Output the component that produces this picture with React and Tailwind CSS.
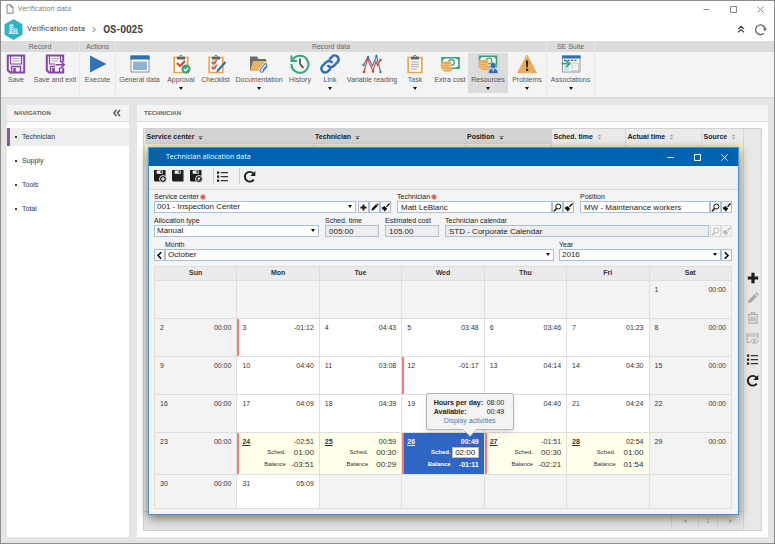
import { clsx } from 'clsx'

/* ---------- Icons ---------- */

function Svg({ size = 20, box = 20, className, children }) {
  return (
    <svg width={size} height={size} viewBox={`0 0 ${box} ${box}`} fill="none" className={clsx('shrink-0', className)} aria-hidden="true">
      {children}
    </svg>
  )
}

function PageIcon({ className }) {
  return (
    <Svg size={10} box={10} className={className}>
      <path d="M2 .8h3.8L8 3v6.2H2zM5.7.8v2.4H8" stroke="currentColor" strokeWidth="0.9" />
    </Svg>
  )
}

function CompanyIcon() {
  return (
    <svg width="19" height="21" viewBox="0 0 19 21" aria-hidden="true">
      <path d="M9.5.5l8.6 4.8v10.4l-8.6 4.8L.9 15.7V5.3z" fill="#2ab5c9" stroke="#1fa4b8" strokeWidth=".6" strokeLinejoin="round" />
      <path d="M5.500 5.500h4v9h-4z" fill="#e4f7f9" />
      <path d="M10 9.500h3.500v5H10z" fill="#b5e6ec" />
      <path d="M6.300 7h.9v1h-.9zm1.600 0h.9v1h-.9zM6.300 9h.9v1h-.9zm1.600 0h.9v1h-.9zm-1.600 2h.9v1h-.9zm1.600 0h.9v3.500h-.9zm3.300 0h1v1h-1zm0 2h1v1.500h-1z" fill="#2ab5c9" />
      <path d="M4.500 14.500h10" stroke="#e4f7f9" strokeWidth=".8" />
    </svg>
  )
}

function Floppy({ arrow }) {
  return (
    <Svg>
      <path d="M1.800 1.500h16.400v17H4l-2.200-2.200z" fill="#f7f4f9" stroke="#8447a8" strokeWidth="2" />
      <path d="M4.500 2v8h11V2" stroke="#8447a8" strokeWidth="1.200" />
      <path d="M5.500 18v-5.500h9V18" stroke="#8447a8" strokeWidth="1.400" />
      <path d="M6.500 4.500h7M6.500 7h7" stroke="#a9a9a9" strokeWidth="1" />
      <path d="M7.200 14h2.600v4.500H7.200z" fill="#8447a8" />
      {arrow && (
        <>
          <path d="M10 7.800h10.500v6H10z" fill="#f4f4f4" />
          <path d="M10.500 10.700h8.500M15.500 7l3.700 3.700-3.700 3.700" stroke="#8447a8" strokeWidth="1.600" />
        </>
      )}
    </Svg>
  )
}

function PlayIcon() {
  return (
    <Svg>
      <path d="M2 1.500l16.500 8.500L2 18.500z" fill="#3273b8" />
    </Svg>
  )
}

function WindowIcon() {
  return (
    <Svg>
      <path d="M1 2h18v16H1z" fill="#fff" stroke="#8c8c8c" />
      <path d="M.5 1.500h19V5.500H.5z" fill="#2f6fb5" />
      <path d="M3 7.500h14v8.700H3z" fill="#8fb2d9" />
    </Svg>
  )
}

function Clipboard({ children }) {
  return (
    <>
      <path d="M3.200 3.500h13.600v15H3.200z" fill="#fff" stroke="#e8a74c" strokeWidth="1.700" />
      <path d="M6 2.700h2.300a1.700 1.700 0 013.400 0H14V5.500H6z" fill="#5f6368" />
      <circle cx="10" cy="2.500" r=".7" fill="#fff" />
      {children}
    </>
  )
}

function ApprovalIcon() {
  return (
    <Svg>
      <Clipboard>
        <path d="M6 9l3 3 5-5" stroke="#d6452c" strokeWidth="2.200" />
        <circle cx="15" cy="15" r="4.600" fill="#35a57c" />
        <path d="M12.800 15l1.700 1.700 2.800-3" stroke="#fff" strokeWidth="1.300" />
      </Clipboard>
    </Svg>
  )
}

function ChecklistIcon() {
  return (
    <Svg>
      <Clipboard>
        <path d="M6 7h3.500v3H6zM6 12h3.500v3H6z" stroke="#999" strokeWidth=".8" />
        <path d="M6 8.200l1.500 1.500L11 6M6 13.200l1.500 1.500L11 11" stroke="#d6452c" strokeWidth="1.400" />
        <path d="M19.500 8L12 16.500" stroke="#2f6fb5" strokeWidth="2.200" />
        <path d="M11.300 15.500l1.800 1.700-3 1.300z" fill="#2f6fb5" />
      </Clipboard>
    </Svg>
  )
}

function FolderClipIcon() {
  return (
    <Svg>
      <path d="M1 2.500h7L9.500 5H17v11H1z" fill="#6b6b6b" />
      <path d="M4 7h14l-2.500 10H1z" fill="#e8b260" />
      <path d="M18.500 12l-4.500 5.500c-1.600 1.700-4-.2-2.600-2l4.300-5.300c1-1.200 2.800.1 1.900 1.400l-3.900 4.800" stroke="#fff" strokeWidth="2.600" />
      <path d="M18.500 12l-4.500 5.500c-1.600 1.700-4-.2-2.600-2l4.300-5.300c1-1.200 2.800.1 1.900 1.400l-3.900 4.800" stroke="#3b78c0" strokeWidth="1.100" />
    </Svg>
  )
}

function HistoryIcon() {
  return (
    <Svg>
      <path d="M3 5.500A8.500 8.500 0 111.500 10" stroke="#34a47b" strokeWidth="2" />
      <path d="M1.500 1.500v5.500H7" stroke="#34a47b" strokeWidth="2" />
      <path d="M10 4.500V10l3.500 4" stroke="#444" strokeWidth="1.600" />
    </Svg>
  )
}

function LinkIcon() {
  return (
    <Svg>
      <g stroke="#2f6fb5" strokeWidth="2.500" strokeLinecap="round">
        <path d="M8.200 11.800a4 4 0 005.600 0l3.700-3.700a3.600 3.600 0 00-5.400-5.500L9.800 4.900" />
        <path d="M11.800 8.200a4 4 0 00-5.600 0l-3.700 3.700a3.600 3.600 0 005.400 5.500l2.300-2.300" />
      </g>
    </Svg>
  )
}

function VariableIcon() {
  return (
    <Svg>
      <path d="M1.500 11L6 3l4.500 9L14.500 2 18.500 17.500" stroke="#3b78c0" strokeWidth="1.100" />
      <path d="M2 17.500L5.500 5l5.500 12 3-9.500 1.500 4L18.500 6" stroke="#d6452c" strokeWidth="1.100" />
      <g fill="#3b78c0">
        <circle cx="1.500" cy="11" r="1.200" />
        <circle cx="6" cy="3" r="1.200" />
        <circle cx="14.500" cy="2" r="1.200" />
        <circle cx="18.500" cy="18" r="1.200" />
      </g>
      <g fill="#d6452c">
        <circle cx="2" cy="18" r="1.300" />
        <circle cx="5.500" cy="5.500" r="1.200" />
        <circle cx="11" cy="17.500" r="1.300" />
        <circle cx="18.500" cy="6" r="1.300" />
      </g>
    </Svg>
  )
}

function TaskIcon() {
  return (
    <Svg>
      <Clipboard>
        <path d="M6 8h8M6 10.300h8M6 12.600h8M6 15h6" stroke="#999" strokeWidth=".9" />
      </Clipboard>
    </Svg>
  )
}

function Money() {
  return (
    <>
      <path d="M2 3.800h17v10.400H2z" fill="#fff" stroke="#34a47b" strokeWidth="1.600" />
      <path d="M2 3.500h3.500L2 7zM19 3.500h-3.500L19 7zM19 14.500h-3.500L19 11z" fill="#34a47b" />
      <circle cx="11.500" cy="8.500" r="2.800" fill="#fff" stroke="#34a47b" strokeWidth="1.300" />
      <g fill="#e8a74c" stroke="#f8e2bc" strokeWidth=".5">
        <ellipse cx="7.500" cy="16" rx="5" ry="1.900" />
        <ellipse cx="6.500" cy="13.700" rx="5" ry="1.900" />
        <ellipse cx="5.500" cy="11.400" rx="5" ry="1.900" />
        <ellipse cx="6.500" cy="9.100" rx="5" ry="1.900" />
      </g>
    </>
  )
}

function ExtraCostIcon() {
  return (
    <Svg>
      <Money />
    </Svg>
  )
}

function ResourcesIcon() {
  return (
    <Svg>
      <g transform="translate(-.5 -1.500)">
        <Money />
      </g>
      <path d="M10.500 19.500c0-3.500 1-5 4.700-5s4.700 1.500 4.700 5z" fill="#2f6fb5" stroke="#dcdcdc" strokeWidth=".6" />
      <circle cx="15.200" cy="11.500" r="3" fill="#2f6fb5" stroke="#dcdcdc" strokeWidth=".6" />
      <path d="M14.500 15h1.400l-.7 3.500z" fill="#fff" />
    </Svg>
  )
}

function ProblemIcon() {
  return (
    <Svg>
      <path d="M10 1.200L19.500 18.800H.5z" fill="#e9ac57" stroke="#e9ac57" strokeLinejoin="round" />
      <path d="M8.900 6.500h2.400l-.5 7H9.400zM9 14.700h2.200v2.200H9z" fill="#222" />
    </Svg>
  )
}

function AssociationsIcon() {
  return (
    <Svg>
      <path d="M1.500 2h17.500v16H1.500z" fill="#f7f9fb" stroke="#8c8c8c" strokeWidth=".9" />
      <path d="M1 1.500h18.500V4.500H1z" fill="#2f6fb5" />
      <path d="M3 6.300h14" stroke="#3c5f88" strokeWidth="1.300" strokeDasharray="2 1.500" />
      <path d="M11 9h6.500v7.500H11z" fill="#fff" stroke="#b5b5b5" strokeWidth=".8" />
      <path d="M12.500 11.500h3.500M12.500 14h3.500" stroke="#c4c4c4" strokeWidth=".8" />
      <path d="M3 12h5v5.500H3z" fill="#bfe6f2" />
      <path d="M.5 9.700h6M5 6.500l3.700 3.200L5 12.900" stroke="#34a47b" strokeWidth="1.800" />
    </Svg>
  )
}

function SolidFloppy({ badge }) {
  return (
    <Svg size={14} box={14}>
      <path d="M1 1h11.500v11.500H2L1 11.500z" fill="#1d1d1d" />
      <path d="M3.700 1.500h6v3.300h-6z" fill="#f0f0f0" />
      <path d="M7.600 2h1.200v2.200H7.600z" fill="#1d1d1d" />
      {badge && (
        <>
          <circle cx="10" cy="10" r="3.500" fill="#1d1d1d" stroke="#f0f0f0" strokeWidth=".9" />
          {badge === 'plus' && <path d="M10 8v4M8 10h4" stroke="#fff" strokeWidth="1.100" />}
          {badge === 'close' && <path d="M8.700 8.700l2.600 2.600M11.300 8.700l-2.600 2.600" stroke="#fff" strokeWidth="1.100" />}
        </>
      )}
    </Svg>
  )
}

function ListIcon() {
  return (
    <Svg size={13} box={13}>
      <path d="M1 1.500h2.200v2.200H1zM1 5.500h2.200v2.200H1zM1 9.500h2.200v2.200H1z" fill="#1d1d1d" />
      <path d="M4.700 2.600H12M4.700 6.600H12M4.700 10.600H12" stroke="#333" strokeWidth="1.100" />
    </Svg>
  )
}

function ReloadIcon({ thin }) {
  return (
    <Svg size={13} box={13}>
      <path d={thin ? 'M9.800 10.200A4.800 4.800 0 1111.200 6' : 'M10.800 9.600A4.900 4.900 0 1110.300 3.300'} stroke={thin ? '#666' : '#1d1d1d'} strokeWidth={thin ? 1.3 : 1.9} />
      <path d={thin ? 'M8.800 5.500h4.200L11 8.300z' : 'M12.300 1v5H7.300z'} fill={thin ? '#666' : '#1d1d1d'} />
    </Svg>
  )
}

function PlusIcon({ size = 12 }) {
  return (
    <Svg size={size} box={12}>
      <path d="M6 .8v10.400M.8 6h10.400" stroke="#1d1d1d" strokeWidth="3.200" />
    </Svg>
  )
}

function PencilIcon({ size = 12 }) {
  return (
    <Svg size={size} box={12}>
      <path d="M.7 11.300l.9-3.300 6-6 2.400 2.400-6 6zM8.200 1.400L9.400.3l2.300 2.300-1.100 1.200z" fill="currentColor" />
    </Svg>
  )
}

function TrashIcon() {
  return (
    <Svg size={12} box={12}>
      <path d="M.8 2.500h10.400M4 2.300V.8h4v1.500M1.900 3v8.300h8.200V3M4.200 4.500v5M6 4.500v5M7.800 4.500v5" stroke="#ababab" strokeWidth="1.100" />
    </Svg>
  )
}

function PreviewIcon() {
  return (
    <Svg size={13} box={13}>
      <path d="M4 10.500H1V2h11v4.500M1 4h11" stroke="#b0b0b0" strokeWidth="1.100" />
      <path d="M4.500 9.200c2-3 5.800-3 7.800 0-2 2.800-5.800 2.800-7.800 0z" stroke="#b0b0b0" strokeWidth="1" />
      <circle cx="8.400" cy="9.200" r="1.200" fill="#b0b0b0" />
    </Svg>
  )
}

function BrushIcon() {
  return (
    <Svg size={9} box={9}>
      <path d="M8.500.5L5.500 3.800" stroke="currentColor" strokeWidth="1.300" />
      <path d="M3.500 3l2.700 2.700-2.400 2.800-.9-.9-.3-.9-1-.1-1-1.900z" fill="currentColor" />
    </Svg>
  )
}

function SearchIcon() {
  return (
    <Svg size={9} box={9}>
      <circle cx="5.300" cy="3.500" r="2.500" stroke="currentColor" strokeWidth="1" />
      <path d="M3.500 5.500L1 8.300" stroke="currentColor" strokeWidth="1.500" />
    </Svg>
  )
}

function Chevron({ left }) {
  return (
    <Svg size={9} box={9}>
      <path d={left ? 'M6.200 1.200L3 4.500l3.200 3.300' : 'M2.800 1.200L6 4.500 2.800 7.800'} stroke="#111" strokeWidth="1.600" />
    </Svg>
  )
}

function Caret({ className }) {
  return (
    <svg width="4" height="3" viewBox="0 0 4 3" className={className} aria-hidden="true">
      <path d="M0 0h4L2 3z" fill="#111" />
    </svg>
  )
}

function SortIcon({ active }) {
  return (
    <svg width="5" height="6" viewBox="0 0 5 6" className={active ? 'text-neutral-800' : 'text-neutral-400'} aria-hidden="true">
      {active ? (
        <path d="M.5 2.400h4v.7h-4zM.7 3.700h3.600L2.500 5.500z" fill="currentColor" />
      ) : (
        <path d="M.5 2.300L2.500.5l2 1.800zM.5 3.700h4l-2 1.800z" fill="currentColor" />
      )}
    </svg>
  )
}

function WindowButtons({ className }) {
  return (
    <div className={clsx('flex items-center gap-5', className)}>
      <button type="button" aria-label="Minimize">
        <Svg size={7} box={7}><path d="M.5 3.500h6" stroke="currentColor" /></Svg>
      </button>
      <button type="button" aria-label="Maximize">
        <Svg size={7} box={7}><path d="M.5.5h6v6h-6z" stroke="currentColor" /></Svg>
      </button>
      <button type="button" aria-label="Close">
        <Svg size={7} box={7}><path d="M.5.5l6 6M6.500.5l-6 6" stroke="currentColor" /></Svg>
      </button>
    </div>
  )
}

/* ---------- Ribbon ---------- */

const ribbon = [
  {
    title: 'Record',
    items: [
      { label: 'Save', icon: <Floppy />, width: 'w-[30px]' },
      { label: 'Save and exit', icon: <Floppy arrow />, width: 'w-[48px]' },
    ],
  },
  { title: 'Actions', items: [{ label: 'Execute', icon: <PlayIcon />, width: 'w-[35px]' }] },
  {
    title: 'Record data',
    items: [
      { label: 'General data', icon: <WindowIcon />, width: 'w-[47px]' },
      { label: 'Approval', icon: <ApprovalIcon />, width: 'w-[36px]', menu: true },
      { label: 'Checklist', icon: <ChecklistIcon />, width: 'w-[33px]' },
      { label: 'Documentation', icon: <FolderClipIcon />, width: 'w-[54px]', menu: true },
      { label: 'History', icon: <HistoryIcon />, width: 'w-[28px]' },
      { label: 'Link', icon: <LinkIcon />, width: 'w-[32px]', menu: true },
      { label: 'Variable reading', icon: <VariableIcon />, width: 'w-[52px]' },
      { label: 'Task', icon: <TaskIcon />, width: 'w-[34px]', menu: true },
      { label: 'Extra cost', icon: <ExtraCostIcon />, width: 'w-[36px]' },
      { label: 'Resources', icon: <ResourcesIcon />, width: 'w-[40px]', menu: true, active: true },
      { label: 'Problems', icon: <ProblemIcon />, width: 'w-[38px]', menu: true },
    ],
  },
  { title: 'SE Suite', items: [{ label: 'Associations', icon: <AssociationsIcon />, width: 'w-[47px]', menu: true }] },
]

function Ribbon() {
  return (
    <div className="flex border-b-2 border-[#dadada] bg-[#f4f4f4]">
      {ribbon.map((group) => (
        <section key={group.title} className="border-r border-[#e9e9e9]">
          <h2 className="h-[11px] bg-[#dcdcdc] text-center leading-[11px] text-[#666]">{group.title}</h2>
          <div className="flex pt-px">
            {group.items.map((item) => (
              <button
                key={item.label}
                type="button"
                className={clsx('flex h-10 flex-col items-center pt-px text-[#555]', item.width, item.active && 'bg-[#dcdcdc]')}
              >
                {item.icon}
                <span className="mt-px h-[10px] leading-[10px] whitespace-nowrap">{item.label}</span>
                {item.menu && <Caret className="mt-[2px]" />}
              </button>
            ))}
          </div>
        </section>
      ))}
      <div className="h-14 flex-1">
        <div className="h-[11px] bg-[#dcdcdc]" />
      </div>
    </div>
  )
}

/* ---------- Navigation ---------- */

const sections = ['Technician', 'Supply', 'Tools', 'Total']

function Navigation() {
  return (
    <nav className="w-[122px] shrink-0 bg-white">
      <div className="flex h-[17px] items-center justify-between border-b border-[#dcdcdc] bg-[#f4f4f4] pr-2 pl-[7px]">
        <h2 className="text-[6px] font-bold text-[#666]">NAVIGATION</h2>
        <button type="button" aria-label="Collapse navigation">
          <Svg size={8} box={8}><path d="M3.500.8L1 4l2.500 3.200M7 .8L4.500 4 7 7.200" stroke="#444" strokeWidth="1.300" /></Svg>
        </button>
      </div>
      <ul className="flex flex-col gap-[6px] pt-[6px]">
        {sections.map((name, i) => (
          <li key={name}>
            <a
              href="#"
              className={clsx(
                'flex h-[18px] items-center gap-[5px] border-l-[3px] pl-[5px] text-[#333]',
                i === 0 ? 'border-[#9152ad] bg-[#eee]' : 'border-transparent',
              )}
            >
              <span className="size-[2px] rounded-full bg-black" />
              {name}
            </a>
          </li>
        ))}
      </ul>
    </nav>
  )
}

/* ---------- Technician list ---------- */

const columns = [
  { name: 'Service center', sorted: true },
  { name: 'Technician', sorted: true, width: 'w-[152px]' },
  { name: 'Position', sorted: true, width: 'w-[86px]' },
  { name: 'Sched. time', width: 'w-[74px]' },
  { name: 'Actual time', width: 'w-[76px]' },
  { name: 'Source', width: 'w-[42px]' },
]

function TechnicianPanel() {
  return (
    <main className="flex min-w-0 flex-1 flex-col bg-white">
      <h2 className="h-[17px] border-b border-[#dcdcdc] bg-[#f4f4f4] pl-[7px] text-[6px] leading-4 font-bold text-[#666]">
        TECHNICIAN
      </h2>
      <div className="mx-[6px] my-[6px] flex flex-1 border border-[#d0d0d0] bg-[#e8e8e8]">
        <div className="flex min-w-0 flex-1 flex-col">
          <table className="w-full table-fixed border-collapse">
            <thead>
              <tr>
                {columns.map((col) => (
                  <th
                    key={col.name}
                    className={clsx(
                      'h-[15px] p-0 pl-[2px] text-left leading-[14px] font-bold whitespace-nowrap text-[#222]',
                      col.width,
                      col.sorted ? 'bg-[#d4d4d4]' : 'border-l border-[#d8d8d8] bg-[#ebebeb]',
                    )}
                  >
                    <span className="inline-flex items-center gap-1">
                      {col.name}
                      <SortIcon active={col.sorted} />
                    </span>
                  </th>
                ))}
              </tr>
            </thead>
            <tbody>
              <tr className="h-[23px] bg-[#f2f0c4]">
                {columns.map((col) => (
                  <td key={col.name} className="border-l border-[#e0deba]" />
                ))}
              </tr>
            </tbody>
          </table>
          <div className="mt-auto flex h-[19px] justify-end border-t border-[#cfcfcf] bg-[#e4e4e4] text-[#aaa]">
            <button type="button" aria-label="Previous page" className="flex w-[27px] items-center justify-center border-l border-[#d4d4d4]">
              <Svg size={4} box={4}><path d="M4 0v4L.5 2z" fill="#b5b5b5" /></Svg>
            </button>
            <span className="w-[19px] border-l border-[#d4d4d4] text-center leading-[18px]">1</span>
            <button type="button" aria-label="Next page" className="flex w-[26px] items-center justify-center border-l border-[#d4d4d4]">
              <Svg size={4} box={4}><path d="M0 0v4l3.500-2z" fill="#b5b5b5" /></Svg>
            </button>
          </div>
        </div>
        <div className="flex w-[18px] flex-col items-center gap-2 border-l border-[#d4d4d4] pt-[143px] text-[#ababab]">
          <button type="button" aria-label="Add"><PlusIcon /></button>
          <button type="button" aria-label="Edit"><PencilIcon /></button>
          <button type="button" aria-label="Delete"><TrashIcon /></button>
          <button type="button" aria-label="View"><PreviewIcon /></button>
          <button type="button" aria-label="List"><ListIcon /></button>
          <button type="button" aria-label="Refresh"><ReloadIcon /></button>
        </div>
      </div>
    </main>
  )
}

/* ---------- Dialog form ---------- */

function SmallButton({ label, disabled, children }) {
  return (
    <button
      type="button"
      aria-label={label}
      disabled={disabled}
      className={clsx(
        'flex h-3 w-[11px] shrink-0 items-center justify-center border',
        disabled ? 'border-[#dcdcdc] text-[#b8b8b8]' : 'border-[#a9c0d6] bg-[#f8f8f8] text-[#111]',
      )}
    >
      {children}
    </button>
  )
}

function Field({ id, label, value, select, readOnly, required, className, children }) {
  return (
    <div className={className}>
      <label htmlFor={id} className="flex h-[9px] items-center gap-px leading-[9px] whitespace-nowrap text-[#222]">
        {label}
        {required && (
          <Svg size={6} box={6}>
            <circle cx="3" cy="3" r="2.700" fill="#f6a79e" />
            <path d="M3 .5v5M.5 3h5M1.200 1.200l3.600 3.600M4.800 1.200L1.200 4.800" stroke="#e33a2a" strokeWidth=".7" />
          </Svg>
        )}
      </label>
      <div className="flex">
        {select ? (
          <div className="relative min-w-0 flex-1">
            <select id={id} defaultValue={value} className="block h-3 w-full appearance-none border border-[#a9c0d6] bg-white pl-[2px] text-[8px] leading-[10px] text-[#222]">
              <option>{value}</option>
            </select>
            <Caret className="pointer-events-none absolute top-1 right-1" />
          </div>
        ) : (
          <input
            id={id}
            defaultValue={value}
            readOnly={readOnly}
            className={clsx('h-3 w-full min-w-0 flex-1 border border-[#a9c0d6] pl-[3px] text-[8px] leading-[10px] text-[#222]', readOnly ? 'bg-[#eee]' : 'bg-white')}
          />
        )}
        {children}
      </div>
    </div>
  )
}

function AllocationForm() {
  return (
    <form className="flex flex-col gap-[3px] pt-[2px]">
      <div className="flex gap-[6px]">
        <Field id="center" label="Service center" value="001 - Inspection Center" select required className="w-[237px]">
          <div className="ml-[2px] flex">
            <SmallButton label="Add"><PlusIcon size={7} /></SmallButton>
            <SmallButton label="Edit"><PencilIcon size={8} /></SmallButton>
            <SmallButton label="Clear"><BrushIcon /></SmallButton>
          </div>
        </Field>
        <Field id="technician" label="Technician" value="Matt LeBlanc" required className="flex-1">
          <SmallButton label="Search"><SearchIcon /></SmallButton>
          <SmallButton label="Clear"><BrushIcon /></SmallButton>
        </Field>
        <Field id="position" label="Position" value="MW - Maintenance workers" className="w-[152px]">
          <SmallButton label="Search"><SearchIcon /></SmallButton>
          <SmallButton label="Clear"><BrushIcon /></SmallButton>
        </Field>
      </div>
      <div className="flex gap-[6px]">
        <Field id="type" label="Allocation type" value="Manual" select className="w-[165px]" />
        <Field id="sched" label="Sched. time" value="005:00" readOnly className="w-[54px]" />
        <Field id="cost" label="Estimated cost" value="105.00" readOnly className="w-[54px]" />
        <Field id="calendar" label="Technician calendar" value="STD - Corporate Calendar" readOnly className="flex-1">
          <div className="ml-px flex">
            <SmallButton label="Search" disabled><SearchIcon /></SmallButton>
            <SmallButton label="Clear" disabled><BrushIcon /></SmallButton>
          </div>
        </Field>
      </div>
      <div className="flex items-end">
        <SmallButton label="Previous month"><Chevron left /></SmallButton>
        <Field id="month" label="Month" value="October" select className="mr-[5px] flex-1" />
        <Field id="year" label="Year" value="2016" select className="w-[162px]" />
        <SmallButton label="Next month"><Chevron /></SmallButton>
      </div>
    </form>
  )
}

/* ---------- Calendar ---------- */

const weekdays = ['Sun', 'Mon', 'Tue', 'Wed', 'Thu', 'Fri', 'Sat']

const weeks = [
  { height: 'h-[38px]', days: [null, null, null, null, null, null, { day: 1, time: '00:00' }] },
  {
    height: 'h-[38px]',
    days: [
      { day: 2, time: '00:00' },
      { day: 3, time: '-01:12', over: true },
      { day: 4, time: '04:43' },
      { day: 5, time: '03:48' },
      { day: 6, time: '03:46' },
      { day: 7, time: '01:23' },
      { day: 8, time: '00:00' },
    ],
  },
  {
    height: 'h-[38px]',
    days: [
      { day: 9, time: '00:00' },
      { day: 10, time: '04:40' },
      { day: 11, time: '03:08' },
      { day: 12, time: '-01:17', over: true },
      { day: 13, time: '04:14' },
      { day: 14, time: '04:30' },
      { day: 15, time: '00:00' },
    ],
  },
  {
    height: 'h-[38px]',
    days: [
      { day: 16, time: '00:00' },
      { day: 17, time: '04:09' },
      { day: 18, time: '04:39' },
      { day: 19, time: '' },
      { day: '', time: '04:40' },
      { day: 21, time: '04:24' },
      { day: 22, time: '00:00' },
    ],
  },
  {
    height: 'h-[42px]',
    days: [
      { day: 23, time: '00:00' },
      { day: 24, time: '-02:51', sched: '01:00', balance: '-03:51', over: true },
      { day: 25, time: '00:59', sched: '00:30', balance: '00:29' },
      { day: 26, time: '00:49', sched: '02:00', balance: '-01:11', over: true, selected: true },
      { day: 27, time: '-01:51', sched: '00:30', balance: '-02:21', over: true },
      { day: 28, time: '02:54', sched: '01:00', balance: '01:54' },
      { day: 29, time: '00:00' },
    ],
  },
  { height: 'h-[34px]', days: [{ day: 30, time: '00:00' }, { day: 31, time: '05:09' }, null, null, null, null, null] },
]

function HoursTooltip() {
  return (
    <div role="tooltip" className="absolute -right-[30px] bottom-full z-10 mb-[3px] w-[88px] rounded-xs border border-[#b4b4b4] bg-[#f3f3f3] py-1 font-normal text-[#222] shadow-md">
      <dl className="grid grid-cols-[53px_1fr] pl-[7px] leading-[9px]">
        <dt className="font-bold whitespace-nowrap">Hours per day:</dt>
        <dd>08:00</dd>
        <dt className="font-bold">Available:</dt>
        <dd>00:49</dd>
      </dl>
      <a href="#" className="block text-center leading-[9px] text-[#3d7fb5]">Display activities</a>
      <svg width="14" height="8" viewBox="0 0 14 8" className="absolute top-full left-9" aria-hidden="true">
        <path d="M0 0l7 7.500L14 0" fill="#f3f3f3" stroke="#b4b4b4" strokeWidth=".8" />
        <path d="M1 -1h12v1.500H1z" fill="#f3f3f3" />
      </svg>
    </div>
  )
}

function DayCell({ entry, weekend }) {
  const planned = entry?.sched
  return (
    <td
      className={clsx(
        'relative border border-[#dedede] p-0 align-top',
        entry?.selected ? 'bg-[#2f66c3] font-bold text-white' : planned ? 'bg-[#ffffea]' : weekend || !entry ? 'bg-[#f3f3f3]' : 'bg-white',
      )}
    >
      {entry?.over && <span className="absolute inset-y-0 left-0 w-[2px] bg-[#f77]" />}
      {entry && (
        <div className="px-[5px] pt-1">
          <div className="flex h-[10px] justify-between leading-[10px]">
            <span className={clsx(planned && 'font-bold underline')}>{entry.day}</span>
            <span>{entry.time}</span>
          </div>
          {planned && (
            <div className="grid grid-cols-[1fr_27px] items-center gap-x-px text-right">
              <label htmlFor={`sched-${entry.day}`} className="text-[6px]">Sched.</label>
              {entry.selected ? (
                <input id={`sched-${entry.day}`} defaultValue={entry.sched} className="h-[11px] w-[27px] border border-[#bbb] bg-white text-center text-[8px] leading-[9px] font-normal text-[#222]" />
              ) : (
                <output id={`sched-${entry.day}`} className="block h-[11px] text-[8px] leading-[11px]">{entry.sched}</output>
              )}
              <span className="text-[6px]">Balance</span>
              <span className={clsx('leading-[13px]', !entry.selected && 'text-[8px]')}>{entry.balance}</span>
            </div>
          )}
        </div>
      )}
      {entry?.selected && <HoursTooltip />}
    </td>
  )
}

function Calendar() {
  return (
    <table className="mt-[5px] w-full table-fixed border-collapse text-[#333]">
      <thead>
        <tr className="h-[14px] bg-[#ebebeb]">
          {weekdays.map((name) => (
            <th key={name} className="border border-[#dedede] p-0 font-bold">{name}</th>
          ))}
        </tr>
      </thead>
      <tbody>
        {weeks.map((week, w) => (
          <tr key={w} className={week.height}>
            {week.days.map((entry, d) => (
              <DayCell key={d} entry={entry} weekend={d === 0 || d === 6} />
            ))}
          </tr>
        ))}
      </tbody>
    </table>
  )
}

function AllocationDialog() {
  return (
    <div
      role="dialog"
      aria-label="Technician allocation data"
      className="absolute top-[146px] right-[35px] left-[147px] border border-[#4a93cf] bg-[#f4f4f4] pb-[5px] shadow-[0_3px_10px_rgba(0,0,0,0.5)]"
    >
      <header className="flex h-[18px] items-center bg-[#0063b1] pr-[10px] pl-1 text-white">
        <PageIcon className="text-[#3d566e]" />
        <h1 className="ml-[3px] font-['Open_Sans'] text-[7px]">Technician allocation data</h1>
        <WindowButtons className="ml-auto" />
      </header>
      <div className="flex h-6 items-center border-b border-[#d8d8d8] bg-[#f0f0f0] pr-1 pb-[3px] pl-1">
        <div className="flex gap-1">
          <button type="button" aria-label="Save and new"><SolidFloppy badge="plus" /></button>
          <button type="button" aria-label="Save"><SolidFloppy /></button>
          <button type="button" aria-label="Save and close"><SolidFloppy badge="close" /></button>
        </div>
        <span className="ml-[10px] h-4 w-px bg-[#ccc]" />
        <button type="button" aria-label="List" className="ml-[2px]"><ListIcon /></button>
        <span className="ml-[10px] h-4 w-px bg-[#ccc]" />
        <button type="button" aria-label="Refresh" className="ml-[3px]"><ReloadIcon /></button>
      </div>
      <div className="pr-[6px] pl-[5px]">
        <AllocationForm />
        <Calendar />
      </div>
    </div>
  )
}

export default function App() {
  return (
    <div className="relative flex min-h-screen flex-col border border-[#8c8c8c] bg-[#e5e5e5] font-['Liberation_Sans',sans-serif] text-[7px]">
      <header className="bg-white">
        <div className="flex h-4 items-center pr-[10px] pl-1 text-[#777]">
          <PageIcon />
          <span className="ml-[3px] font-['Open_Sans'] text-[7px]">Verification data</span>
          <WindowButtons className="ml-auto text-[#888]" />
        </div>
        <div className="flex h-6 items-center pr-[7px] pl-[3px] text-[#444]">
          <CompanyIcon />
          <span className="ml-1 font-[Roboto] text-[8px]">Verification data</span>
          <Svg size={5} box={5} className="ml-[7px]"><path d="M1 .3l2 2.200-2 2.200" stroke="#444" strokeWidth=".9" /></Svg>
          <strong className="ml-[6px] font-[Roboto] text-[10px] font-bold">OS-0025</strong>
          <button type="button" aria-label="Collapse ribbon" className="mr-[9px] ml-auto">
            <Svg size={8} box={8}><path d="M1 4l3-2.700L7 4M1 7.300l3-2.700 3 2.700" stroke="#444" strokeWidth="1.200" /></Svg>
          </button>
          <button type="button" aria-label="Reload"><ReloadIcon thin /></button>
        </div>
      </header>
      <Ribbon />
      <div className="flex flex-1 gap-2 px-[6px] pt-[6px] pb-[6px]">
        <Navigation />
        <TechnicianPanel />
      </div>
      <AllocationDialog />
    </div>
  )
}
